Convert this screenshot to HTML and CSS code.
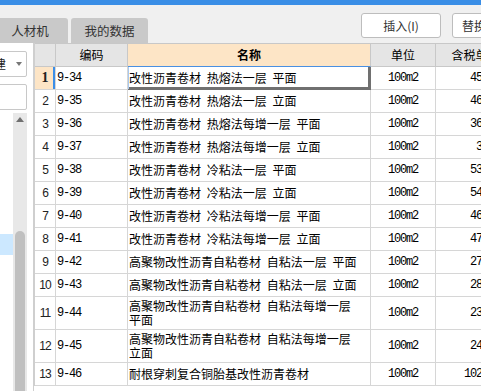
FILE: index.html
```html
<!DOCTYPE html>
<html lang="zh-CN">
<head>
    <meta charset="UTF-8">
    <title>人材机</title>
    <link rel="stylesheet" href="styles.css">
</head>
<body>
    <div class="titlebar"></div>
    <div class="toolbar">
        <div class="tabs">
            <div class="tab tab-first">人材机</div>
            <div class="tab tab-second">我的数据</div>
        </div>
        <div class="actions">
            <button class="btn">插入(I)</button>
            <button class="btn">替换人材机</button>
        </div>
    </div>

    <div class="main">
        <div class="side">
            <div class="combo"><span class="combo-text">土建</span><span class="caret"></span></div>
            <div class="search"></div>
            <div class="tree">
                <div class="tree-list"><div class="tree-sel"></div></div>
                <div class="vscroll"><span class="up"></span><div class="thumb"></div></div>
            </div>
        </div>

        <div class="grid">
            <table>
                <colgroup>
                    <col style="width:21px">
                    <col style="width:72px">
                    <col style="width:243px">
                    <col style="width:65px">
                    <col style="width:80px">
                </colgroup>
                <thead>
                    <tr>
                        <th></th>
                        <th>编码</th>
                        <th class="active">名称</th>
                        <th>单位</th>
                        <th>含税单价</th>
                    </tr>
                </thead>
                <tbody>
                    <tr class="current">
                        <td class="num">1</td><td class="code">9-34</td>
                        <td class="name focus">改性沥青卷材 热熔法一层 平面</td>
                        <td class="unit">100m2</td><td class="price">4563.28</td>
                    </tr>
                    <tr>
                        <td class="num">2</td><td class="code">9-35</td>
                        <td class="name">改性沥青卷材 热熔法一层 立面</td>
                        <td class="unit">100m2</td><td class="price">4671.05</td>
                    </tr>
                    <tr>
                        <td class="num">3</td><td class="code">9-36</td>
                        <td class="name">改性沥青卷材 热熔法每增一层 平面</td>
                        <td class="unit">100m2</td><td class="price">3645.92</td>
                    </tr>
                    <tr>
                        <td class="num">4</td><td class="code">9-37</td>
                        <td class="name">改性沥青卷材 热熔法每增一层 立面</td>
                        <td class="unit">100m2</td><td class="price">386.41</td>
                    </tr>
                    <tr>
                        <td class="num">5</td><td class="code">9-38</td>
                        <td class="name">改性沥青卷材 冷粘法一层 平面</td>
                        <td class="unit">100m2</td><td class="price">5372.16</td>
                    </tr>
                    <tr>
                        <td class="num">6</td><td class="code">9-39</td>
                        <td class="name">改性沥青卷材 冷粘法一层 立面</td>
                        <td class="unit">100m2</td><td class="price">5480.37</td>
                    </tr>
                    <tr>
                        <td class="num">7</td><td class="code">9-40</td>
                        <td class="name">改性沥青卷材 冷粘法每增一层 平面</td>
                        <td class="unit">100m2</td><td class="price">4689.10</td>
                    </tr>
                    <tr>
                        <td class="num">8</td><td class="code">9-41</td>
                        <td class="name">改性沥青卷材 冷粘法每增一层 立面</td>
                        <td class="unit">100m2</td><td class="price">4718.65</td>
                    </tr>
                    <tr>
                        <td class="num">9</td><td class="code">9-42</td>
                        <td class="name">高聚物改性沥青自粘卷材 自粘法一层 平面</td>
                        <td class="unit">100m2</td><td class="price">2756.33</td>
                    </tr>
                    <tr>
                        <td class="num">10</td><td class="code">9-43</td>
                        <td class="name">高聚物改性沥青自粘卷材 自粘法一层 立面</td>
                        <td class="unit">100m2</td><td class="price">2849.72</td>
                    </tr>
                    <tr>
                        <td class="num">11</td><td class="code">9-44</td>
                        <td class="name">高聚物改性沥青自粘卷材 自粘法每增一层 平面</td>
                        <td class="unit">100m2</td><td class="price">2370.84</td>
                    </tr>
                    <tr>
                        <td class="num">12</td><td class="code">9-45</td>
                        <td class="name">高聚物改性沥青自粘卷材 自粘法每增一层 立面</td>
                        <td class="unit">100m2</td><td class="price">2461.19</td>
                    </tr>
                    <tr>
                        <td class="num">13</td><td class="code">9-46</td>
                        <td class="name">耐根穿刺复合铜胎基改性沥青卷材</td>
                        <td class="unit">100m2</td><td class="price">10236.47</td>
                    </tr>
                </tbody>
            </table>
        </div>
    </div>
</body>
</html>
```

FILE: styles.css
```css
body {
    margin: 0;
    width: 481px;
    height: 391px;
    overflow: hidden;
    background: #fff;
    color: #000;
    font-family: "Noto Sans CJK SC", sans-serif;
    font-size: 12px;
}
.titlebar {
    height: 5px;
    background: #3a8ee6;
}
.toolbar {
    height: 38px;
    background: #f0f0f0;
    display: flex;
    align-items: flex-end;
    overflow: hidden;
}
.tabs {
    display: flex;
    gap: 3px;
    margin-left: -8px;
    flex-shrink: 0;
}
.tab {
    height: 25px;
    line-height: 25px;
    text-align: center;
    background: #c9c9c9;
    color: #333;
    font-size: 12.5px;
    border-radius: 3px 3px 0 0;
}
.tab-first {
    width: 76px;
}
.tab-second {
    width: 77px;
}
.actions {
    display: flex;
    gap: 11px;
    align-self: flex-start;
    margin: 8px 0 0 213px;
    flex-shrink: 0;
}
.btn {
    width: 80px;
    height: 25px;
    flex-shrink: 0;
    box-sizing: border-box;
    padding: 0;
    border: 1px solid #bdbdbd;
    border-radius: 3px;
    background: #fff;
    color: #333;
    font: inherit;
    line-height: 22px;
    white-space: nowrap;
}
.main {
    display: flex;
    height: 348px;
}
.side {
    width: 33px;
    flex-shrink: 0;
    border-right: 1px solid #cfcfcf;
    display: flex;
    flex-direction: column;
    overflow: hidden;
}
.combo,
.search {
    width: 120px;
    height: 26px;
    flex-shrink: 0;
    box-sizing: border-box;
    border: 1px solid #c8c8c8;
    border-radius: 2px;
    background: #fff;
    margin-left: -93px;
}
.combo {
    margin-top: 8px;
    display: flex;
    align-items: center;
    justify-content: flex-end;
    gap: 10px;
    padding-right: 4px;
}
.combo-text {
    color: #222;
    line-height: 14px;
}
.caret {
    width: 0;
    height: 0;
    border-left: 3px solid transparent;
    border-right: 3px solid transparent;
    border-top: 4px solid #777;
}
.search {
    margin-top: 7px;
}
.tree {
    flex: 1;
    display: flex;
    margin-top: 3px;
}
.tree-list {
    width: 13px;
}
.tree-sel {
    margin-top: 121px;
    height: 21px;
    background: #cce8ff;
}
.vscroll {
    width: 14px;
    background: #e8e8e8;
    display: flex;
    flex-direction: column;
    align-items: center;
}
.up {
    margin-top: 4px;
    width: 0;
    height: 0;
    border-left: 4px solid transparent;
    border-right: 4px solid transparent;
    border-bottom: 5px solid #707070;
}
.thumb {
    width: 10px;
    flex: 1;
    margin-top: 109px;
    background: #c0c0c0;
    border-radius: 5px 5px 0 0;
}
.grid {
    flex: 1;
    overflow: hidden;
}
table {
    width: 482px;
    table-layout: fixed;
    border-collapse: separate;
    border-spacing: 0;
    border-left: 1px solid #cfcfcf;
}
th {
    height: 24px;
    box-sizing: border-box;
    padding: 0;
    background: #e5e5e5;
    border-top: 1px solid #c8c8c8;
    border-right: 1px solid #c8c8c8;
    border-bottom: 1px solid #c8c8c8;
    font-weight: normal;
    line-height: 14px;
    white-space: nowrap;
    overflow: hidden;
}
th.active {
    background: #fde5c6;
    font-weight: bold;
    border-bottom-color: #4a90e2;
}
td {
    height: 23px;
    box-sizing: border-box;
    padding: 2px 1px;
    border-right: 1px solid #d6d6d6;
    border-bottom: 1px solid #d6d6d6;
    line-height: 14px;
    vertical-align: middle;
}
.num {
    padding: 0;
    text-align: center;
    font-family: "Liberation Sans", sans-serif;
    letter-spacing: -1px;
    color: #222;
}
.current .num {
    background: #fde5c6;
    font-family: "Liberation Serif", serif;
    font-weight: bold;
    font-size: 14px;
    letter-spacing: 0;
    box-shadow: inset -2px 0 0 #3b8ee8;
}
.code,
.unit,
.price {
    font-family: "Liberation Mono", monospace;
    letter-spacing: -1.2px;
    white-space: nowrap;
}
.unit {
    text-align: center;
}
.price {
    text-align: right;
    padding-right: 3px;
}
.name {
    padding-right: 4px;
    word-spacing: 3px;
}
.focus {
    border-right-color: #707070;
    border-bottom-color: #707070;
    box-shadow: inset 1px 0 0 #a8c8ee, inset -2px -2px 0 #707070;
}
```
